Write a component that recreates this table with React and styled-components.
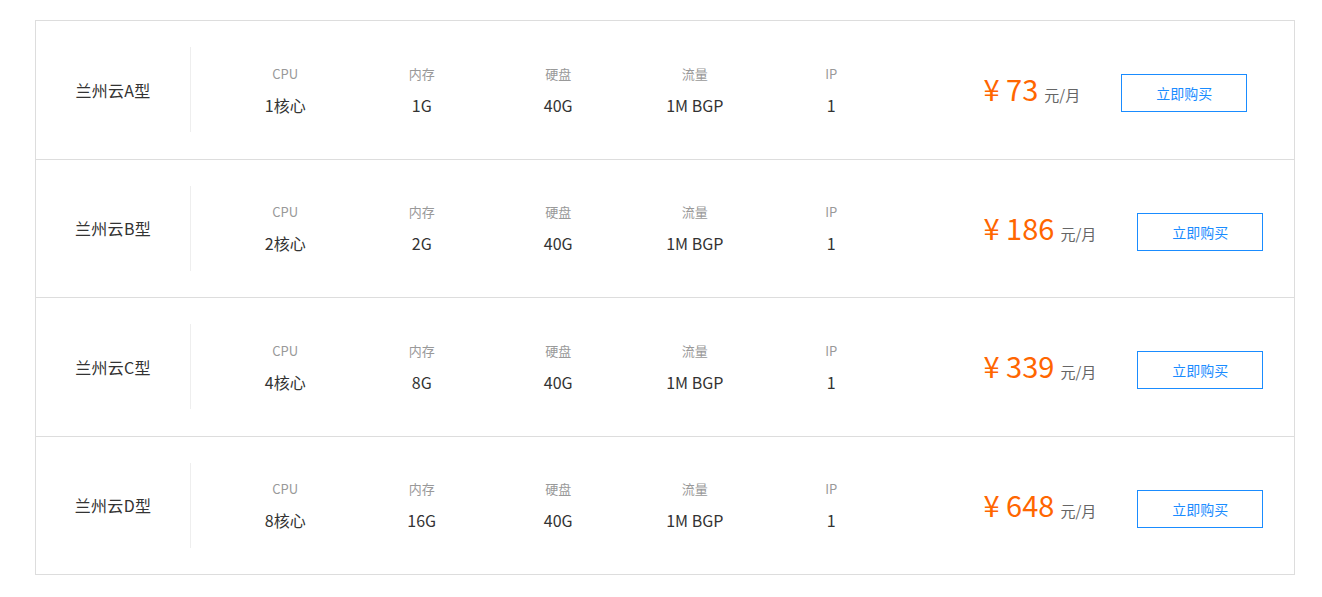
import React from 'react';
import styled, { createGlobalStyle } from 'styled-components';

const GlobalStyle = createGlobalStyle`
  body {
    margin: 0;
    background: #fff;
    font-family: "Microsoft YaHei", "Noto Sans CJK SC", "Noto Sans", sans-serif;
    color: #333;
  }
`;

const Table = styled.section`
  width: 1260px;
  box-sizing: border-box;
  margin: 20px 0 0 35px;
  border: 1px solid #ddd;
`;

const Row = styled.div`
  height: 137.5px;
  display: flex;
  align-items: center;
  border-bottom: 1px solid #ddd;

  &:last-child {
    border-bottom: 0;
  }
`;

const Name = styled.div`
  width: 154px;
  height: 85px;
  display: flex;
  align-items: center;
  justify-content: center;
  border-right: 1px solid #eee;
  font-size: 16px;
  letter-spacing: 0.3px;
  color: #333;
`;

const Specs = styled.div`
  display: grid;
  grid-template-columns: repeat(5, 136.5px);
  margin-left: 26px;
`;

const Spec = styled.div`
  display: flex;
  flex-direction: column;
  align-items: center;
`;

const Label = styled.span`
  font-size: 13px;
  line-height: 20px;
  color: #999;
`;

const Value = styled.span`
  margin-top: 10px;
  font-size: 16px;
  line-height: 22px;
  color: #333;
`;

const Buy = styled.div`
  display: flex;
  align-items: center;
  margin: 4px 0 0 84px;
  gap: 41px;
`;

const Price = styled.div`
  display: flex;
  align-items: baseline;
  color: #ff6600;
  font-size: 29px;
  line-height: 36px;
`;

const Unit = styled.span`
  margin-left: 6px;
  font-size: 15px;
  color: #666;
`;

const Button = styled.button`
  width: 126px;
  height: 38px;
  margin-top: 3px;
  border: 1px solid #1a8cff;
  background: #fff;
  color: #1a8cff;
  font-family: inherit;
  font-size: 14px;
  cursor: pointer;
`;

const plans = [
  { name: '兰州云A型', cpu: '1核心', mem: '1G', price: 73 },
  { name: '兰州云B型', cpu: '2核心', mem: '2G', price: 186 },
  { name: '兰州云C型', cpu: '4核心', mem: '8G', price: 339 },
  { name: '兰州云D型', cpu: '8核心', mem: '16G', price: 648 },
];

const App = () => (
  <>
    <GlobalStyle />
    <Table>
      {plans.map(plan => (
        <Row key={plan.name}>
          <Name>{plan.name}</Name>
          <Specs>
            {[
              ['CPU', plan.cpu],
              ['内存', plan.mem],
              ['硬盘', '40G'],
              ['流量', '1M BGP'],
              ['IP', '1'],
            ].map(([label, value]) => (
              <Spec key={label}>
                <Label>{label}</Label>
                <Value>{value}</Value>
              </Spec>
            ))}
          </Specs>
          <Buy>
            <Price>
              ¥ {plan.price}
              <Unit>元/月</Unit>
            </Price>
            <Button>立即购买</Button>
          </Buy>
        </Row>
      ))}
    </Table>
  </>
);

export default App;
